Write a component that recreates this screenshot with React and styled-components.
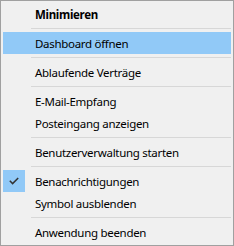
import styled, { createGlobalStyle } from "styled-components";

const GlobalStyle = createGlobalStyle`
  html, body {
    margin: 0;
    padding: 0;
    background: #f0f0f0;
  }
`;

const entries = [
  { label: "Minimieren", bold: true },
  { sep: true },
  { label: "Dashboard öffnen", active: true },
  { sep: true },
  { label: "Ablaufende Verträge" },
  { sep: true },
  { label: "E-Mail-Empfang" },
  { label: "Posteingang anzeigen" },
  { sep: true },
  { label: "Benutzerverwaltung starten" },
  { sep: true },
  { label: "Benachrichtigungen", checked: true },
  { label: "Symbol ausblenden" },
  { sep: true },
  { label: "Anwendung beenden" },
];

const CheckIcon = () => (
  <svg width="10" height="8" viewBox="0 0 10 8">
    <path
      d="M0.8 3.8 L3.6 6.6 L9.2 1"
      fill="none"
      stroke="#333"
      strokeWidth="1.5"
    />
  </svg>
);

const ContextMenu = () => {
  return (
    <Menu>
      {entries.map((e, i) =>
        e.sep ? (
          <Separator key={i} />
        ) : (
          <Item key={i} $active={e.active}>
            <Gutter>{e.checked ? <CheckBox><CheckIcon /></CheckBox> : null}</Gutter>
            <Label $bold={e.bold}>{e.label}</Label>
          </Item>
        )
      )}
    </Menu>
  );
};

const Menu = styled.div`
  box-sizing: border-box;
  width: 234px;
  display: flex;
  flex-direction: column;
  padding: 2px;
  border: 1px solid #a0a0a0;
  background: #f0f0f0;
  font-family: "Noto Sans", "Open Sans", sans-serif;
  font-size: 11.5px;
  letter-spacing: -0.3px;
  color: #000;
`;

const Item = styled.div`
  height: 22px;
  display: flex;
  align-items: center;
  background: ${({ $active }) => ($active ? "#91c9f7" : "transparent")};
`;

const Gutter = styled.div`
  width: 28px;
  height: 22px;
  flex-shrink: 0;
  display: flex;
`;

const CheckBox = styled.div`
  width: 22px;
  height: 22px;
  background: #91c9f7;
  display: flex;
  align-items: center;
  justify-content: center;
`;

const Label = styled.span`
  padding-left: 4px;
  font-weight: ${({ $bold }) => ($bold ? 700 : 400)};
  white-space: nowrap;
`;

const Separator = styled.div`
  height: 7px;
  margin-left: 28px;
  display: flex;
  align-items: center;
  &::before {
    content: "";
    flex: 1;
    height: 1px;
    background: #d7d7d7;
  }
`;

export default function App() {
  return (
    <>
      <GlobalStyle />
      <ContextMenu />
    </>
  );
}
